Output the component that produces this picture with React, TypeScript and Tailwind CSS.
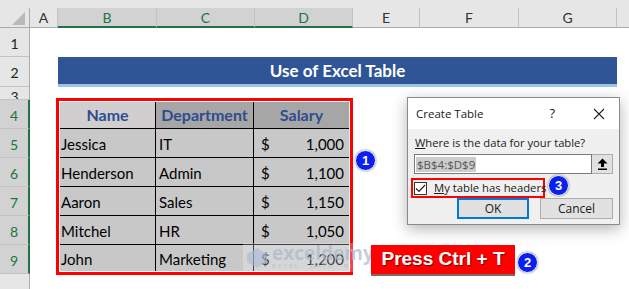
import React from "react";

const cols = [
  { l: "A", w: 28, sel: false },
  { l: "B", w: 99, sel: true },
  { l: "C", w: 98, sel: true },
  { l: "D", w: 98, sel: true },
  { l: "E", w: 67, sel: false },
  { l: "F", w: 99, sel: false },
  { l: "G", w: 98, sel: false },
];

const rows = [
  { n: 1, h: 29, sel: false },
  { n: 2, h: 30, sel: false },
  { n: 3, h: 13, sel: false },
  { n: 4, h: 29, sel: true },
  { n: 5, h: 29, sel: true },
  { n: 6, h: 29, sel: true },
  { n: 7, h: 29, sel: true },
  { n: 8, h: 29, sel: true },
  { n: 9, h: 29, sel: true },
  { n: 10, h: 44, sel: false },
];

const data = [
  ["Jessica", "IT", "1,000"],
  ["Henderson", "Admin", "1,100"],
  ["Aaron", "Sales", "1,150"],
  ["Mitchel", "HR", "1,050"],
  ["John", "Marketing", "1,200"],
];

function Badge({ n, className }: { n: number; className: string }) {
  return (
    <div
      className={`absolute w-[21px] h-[21px] rounded-full bg-[#0a1ff0] border border-white shadow-[0_0_2px_rgba(0,0,0,0.6)] flex items-center justify-center text-white text-[13px] font-bold font-['Liberation_Sans',sans-serif] ${className}`}
    >
      {n}
    </div>
  );
}

export default function App() {
  return (
    <div className="w-[629px] h-[289px] bg-white relative overflow-hidden font-['Lato',sans-serif] text-black">
      {/* column headers */}
      <div className="h-[8px] bg-[#e6e6e6]" />
      <div className="h-[20px] flex bg-[#e6e6e6] border-b border-[#ababab]">
        <div className="w-[30px] border-r border-[#ababab] relative">
          <div className="absolute right-[4px] bottom-[2px] w-0 h-0 border-l-[13px] border-l-transparent border-b-[13px] border-b-[#b9b9b9]" />
        </div>
        {cols.map((c) => (
          <div
            key={c.l}
            style={{ width: c.w }}
            className={`shrink-0 border-r border-[#c3c3c3] flex items-center justify-center text-[14px] ${
              c.sel
                ? "bg-[#d2d2d2] text-[#217346] border-b-2 border-b-[#217346] -mb-px"
                : "text-[#333]"
            }`}
          >
            {c.l}
          </div>
        ))}
        <div className="flex-1" />
      </div>

      <div className="flex">
        {/* row headers */}
        <div className="w-[30px] shrink-0 bg-[#e6e6e6] flex flex-col">
          {rows.map((r) => (
            <div
              key={r.n}
              style={{ height: r.h }}
              className={`shrink-0 border-b border-[#c3c3c3] flex justify-center overflow-hidden text-[14px] leading-none ${
                r.n === 3 ? "items-end" : "items-center pt-[3px]"
              } ${
                r.sel
                  ? "bg-[#d2d2d2] text-[#217346] border-r-2 border-r-[#217346]"
                  : "text-[#222] border-r border-r-[#ababab]"
              }`}
            >
              {r.n !== 10 && (
                <span className={r.n === 3 ? "-mb-[5px]" : ""}>{r.n}</span>
              )}
            </div>
          ))}
        </div>

        {/* sheet */}
        <div className="flex-1 flex flex-col">
          <div className="h-[29px]" />
          <div className="ml-[28px] w-[559px] h-[30px] bg-[#2f5597] border-b-[3px] border-[#9dc3e6] flex items-center justify-center text-white font-bold text-[17px] pt-[1px]">
            Use of Excel Table
          </div>
          <div className="h-[11px]" />
          <div className="ml-[26px] w-[297px] h-[177px] border-[3px] border-[#ff0000] flex">
            <div className="flex-1 border border-dashed border-white flex flex-col text-[15px]">
              <div className="h-[27px] shrink-0 flex border-b border-black font-bold text-[#2f4d8e] text-[16px]">
                <div className="w-[96px] bg-[#d0cece] flex items-center justify-center border-r border-black">
                  Name
                </div>
                <div className="w-[98px] bg-[#a6a6a6] flex items-center justify-center border-r border-black">
                  Department
                </div>
                <div className="flex-1 bg-[#a6a6a6] flex items-center justify-center">
                  Salary
                </div>
              </div>
              {data.map((d, i) => (
                <div
                  key={d[0]}
                  className={`flex bg-[#c8c8c8] ${
                    i < 4 ? "h-[29px] shrink-0 border-b border-black" : "flex-1"
                  }`}
                >
                  <div className="w-[96px] border-r border-black flex items-center pl-[1px] pt-[2px]">
                    {d[0]}
                  </div>
                  <div className="w-[98px] border-r border-black flex items-center pl-[3px] pt-[2px]">
                    {d[1]}
                  </div>
                  <div className="flex-1 flex items-center justify-between pl-[7px] pr-[5px] pt-[2px]">
                    <span>$</span>
                    <span>{d[2]}</span>
                  </div>
                </div>
              ))}
            </div>
          </div>
        </div>
      </div>

      {/* watermark */}
      <div className="absolute left-[243px] top-[243px] w-[135px] h-[29px] bg-white/25 flex items-center gap-[4px] pl-[3px] text-[#a9b7cf]/70">
        <svg width="22" height="22" viewBox="0 0 22 22">
          <path d="M11 1 L21 7 L21 15 L11 21 L1 15 L1 7 Z" fill="#a9b8d2" opacity="0.6" />
        </svg>
        <div className="flex flex-col leading-none">
          <span className="text-[19px] font-bold font-['Open_Sans',sans-serif] -mt-[3px]">exceldemy</span>
          <span className="text-[6px] tracking-[2px]">EXCEL · DATA · BI</span>
        </div>
      </div>

      {/* dialog */}
      <div className="absolute left-[407px] top-[97px] w-[213px] h-[128px] border border-[#8a8a8a] bg-[#f0f0f0] shadow-[0_4px_14px_rgba(0,0,0,0.3)] font-['Open_Sans',sans-serif] text-[#1a1a1a]">
        <div className="h-[31px] bg-white flex items-center pl-[8px] pr-[14px] text-[11.5px]">
          <span>Create Table</span>
          <span className="ml-auto mr-[38px] text-[13px]">?</span>
          <svg width="12" height="12" viewBox="0 0 12 12">
            <path d="M1 1 L11 11 M11 1 L1 11" stroke="#222" strokeWidth="1.1" />
          </svg>
        </div>
        <div className="px-[6px] pt-[5px] flex flex-col">
          <div className="text-[11.2px] pl-[1px] leading-[18px]">
            <span className="underline">W</span>here is the data for your table?
          </div>
          <div className="flex h-[20px] mt-[2px]">
            <div className="flex-1 bg-white border border-[#7a7a7a] flex items-center pl-[1px] text-[11.5px]">
              <span className="bg-[#cccccc] text-[#555] px-[1px] leading-[15px]">$B$4:$D$9</span>
            </div>
            <div className="w-[21px] bg-[#e1e1e1] border border-l-0 border-[#adadad] flex items-center justify-center">
              <svg width="11" height="12" viewBox="0 0 11 12">
                <path d="M5.5 0.5 L10.5 5.5 L7 5.5 L7 9 L4 9 L4 5.5 L0.5 5.5 Z" fill="#000" />
                <rect x="1" y="10.5" width="9" height="1.5" fill="#000" />
              </svg>
            </div>
          </div>
          <div className="flex items-center mt-[4px]">
            <div className="-ml-[3px] h-[20px] w-[134px] border-2 border-[#ff0000] flex items-center pl-[1px] gap-[7px]">
              <div className="w-[13px] h-[13px] bg-white border border-[#333] flex items-center justify-center">
                <svg width="11" height="9" viewBox="0 0 11 9">
                  <path d="M1 4.5 L4 7.5 L10 1" stroke="#222" strokeWidth="1.2" fill="none" />
                </svg>
              </div>
              <span className="text-[11.3px] leading-none whitespace-nowrap">
                <span className="underline">M</span>y table has headers
              </span>
            </div>
          </div>
          <div className="flex justify-end gap-[11px]">
            <div className="w-[72px] h-[21px] bg-[#e1e1e1] border-2 border-[#0078d7] flex items-center justify-center text-[12px]">
              OK
            </div>
            <div className="w-[73px] h-[21px] bg-[#e1e1e1] border border-[#adadad] flex items-center justify-center text-[12px]">
              Cancel
            </div>
          </div>
        </div>
      </div>

      {/* press ctrl+t */}
      <div className="absolute left-[371px] top-[245px] w-[144px] h-[31px] bg-[#ff0000] border-b-2 border-[#7a6a6a] flex items-center justify-center text-white font-bold text-[19px] font-['Liberation_Sans',sans-serif] [text-shadow:1px_1px_1px_rgba(0,0,0,0.5)]">
        Press Ctrl + T
      </div>

      <Badge n={1} className="left-[355px] top-[150px]" />
      <Badge n={2} className="left-[517px] top-[252px]" />
      <Badge n={3} className="left-[548px] top-[175px]" />
    </div>
  );
}
